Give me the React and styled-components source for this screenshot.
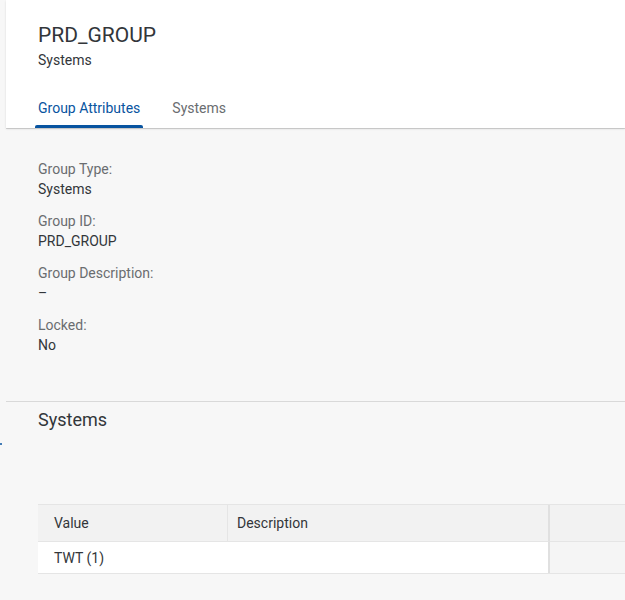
import React from "react";
import styled, { createGlobalStyle } from "styled-components";

const Global = createGlobalStyle`
  html, body { margin: 0; padding: 0; background: #f7f7f7; }
  body { font-family: Roboto, "Liberation Sans", Arial, sans-serif; color: #32363a; }
`;

const Page = styled.div`
  width: 625px;
  height: 600px;
  overflow: hidden;
  background: #f7f7f7;
  display: flex;
  flex-direction: column;
`;

const Header = styled.header`
  margin-left: 6px;
  background: #ffffff;
  box-shadow: 0 1px 2px rgba(0, 0, 0, 0.12), 0 1px 0 #d9d9d9;
  padding: 23px 0 0 32px;
  height: 105px;
  display: flex;
  flex-direction: column;
`;

const Title = styled.h1`
  margin: 0;
  font-size: 21px;
  font-weight: 400;
  line-height: 24px;
  color: #32363a;
`;

const Subtitle = styled.div`
  margin-top: 5px;
  font-size: 14px;
  line-height: 16px;
  color: #32363a;
`;

const TabBar = styled.nav`
  margin-top: 32px;
  display: flex;
  gap: 26px;
  margin-left: -3px;
`;

const Tab = styled.div`
  position: relative;
  padding: 0 3px;
  height: 28px;
  font-size: 14px;
  line-height: 16px;
  color: ${(p) => (p.$active ? "#0854a0" : "#6a6d70")};
  &::after {
    content: "";
    display: ${(p) => (p.$active ? "block" : "none")};
    position: absolute;
    left: 0;
    right: 0;
    bottom: 0;
    height: 3px;
    border-radius: 2px 2px 0 0;
    background: #0854a0;
  }
`;

const Attributes = styled.section`
  padding: 33px 0 0 38px;
  display: flex;
  flex-direction: column;
  gap: 16px;
  height: 240px;
  box-sizing: border-box;
`;

const Field = styled.div`
  display: flex;
  flex-direction: column;
  gap: 4px;
`;

const Label = styled.div`
  font-size: 14px;
  line-height: 16px;
  color: #6a6d70;
`;

const Value = styled.div`
  font-size: 14px;
  line-height: 16px;
  color: #32363a;
`;

const Section = styled.section`
  margin-left: 6px;
  margin-top: 33px;
  border-top: 1px solid #d9d9d9;
  position: relative;
`;

const FocusMark = styled.span`
  position: absolute;
  left: -6px;
  top: 41px;
  width: 2px;
  height: 2px;
  border-radius: 1px;
  background: #0854a0;
`;

const SectionTitle = styled.h2`
  margin: 0;
  padding: 7px 0 0 32px;
  font-size: 18px;
  font-weight: 400;
  line-height: 22px;
  color: #32363a;
`;

const Table = styled.div`
  margin: 73px 0 0 32px;
  display: grid;
  grid-template-columns: 190px 322px 1fr;
  border-top: 1px solid #e5e5e5;
  border-bottom: 1px solid #e5e5e5;
`;

const HeadCell = styled.div`
  height: 36px;
  display: flex;
  align-items: center;
  padding-left: ${(p) => (p.$first ? "16px" : "9px")};
  background: #f2f2f2;
  font-size: 14px;
  color: #32363a;
  border-right: ${(p) => (p.$last ? "2px solid #e0e0e0" : "1px solid #e5e5e5")};
  border-bottom: 1px solid #e5e5e5;
`;

const FillerHead = styled.div`
  background: #f2f2f2;
  border-bottom: 1px solid #e5e5e5;
`;

const Cell = styled.div`
  height: 31px;
  display: flex;
  align-items: center;
  padding-left: ${(p) => (p.$first ? "16px" : "9px")};
  background: #ffffff;
  font-size: 14px;
  color: #32363a;
  ${(p) => p.$last && "border-right: 2px solid #e0e0e0;"}
`;

const Filler = styled.div`
  background: #f5f5f5;
`;

export default function App() {
  return (
    <Page>
      <Global />
      <Header>
        <Title>PRD_GROUP</Title>
        <Subtitle>Systems</Subtitle>
        <TabBar>
          <Tab $active>Group Attributes</Tab>
          <Tab>Systems</Tab>
        </TabBar>
      </Header>
      <Attributes>
        <Field>
          <Label>Group Type:</Label>
          <Value>Systems</Value>
        </Field>
        <Field>
          <Label>Group ID:</Label>
          <Value>PRD_GROUP</Value>
        </Field>
        <Field>
          <Label>Group Description:</Label>
          <Value>–</Value>
        </Field>
        <Field>
          <Label>Locked:</Label>
          <Value>No</Value>
        </Field>
      </Attributes>
      <Section>
        <FocusMark />
        <SectionTitle>Systems</SectionTitle>
        <Table>
          <HeadCell $first>Value</HeadCell>
          <HeadCell $last>Description</HeadCell>
          <FillerHead />
          <Cell $first>TWT (1)</Cell>
          <Cell $last />
          <Filler />
        </Table>
      </Section>
    </Page>
  );
}
